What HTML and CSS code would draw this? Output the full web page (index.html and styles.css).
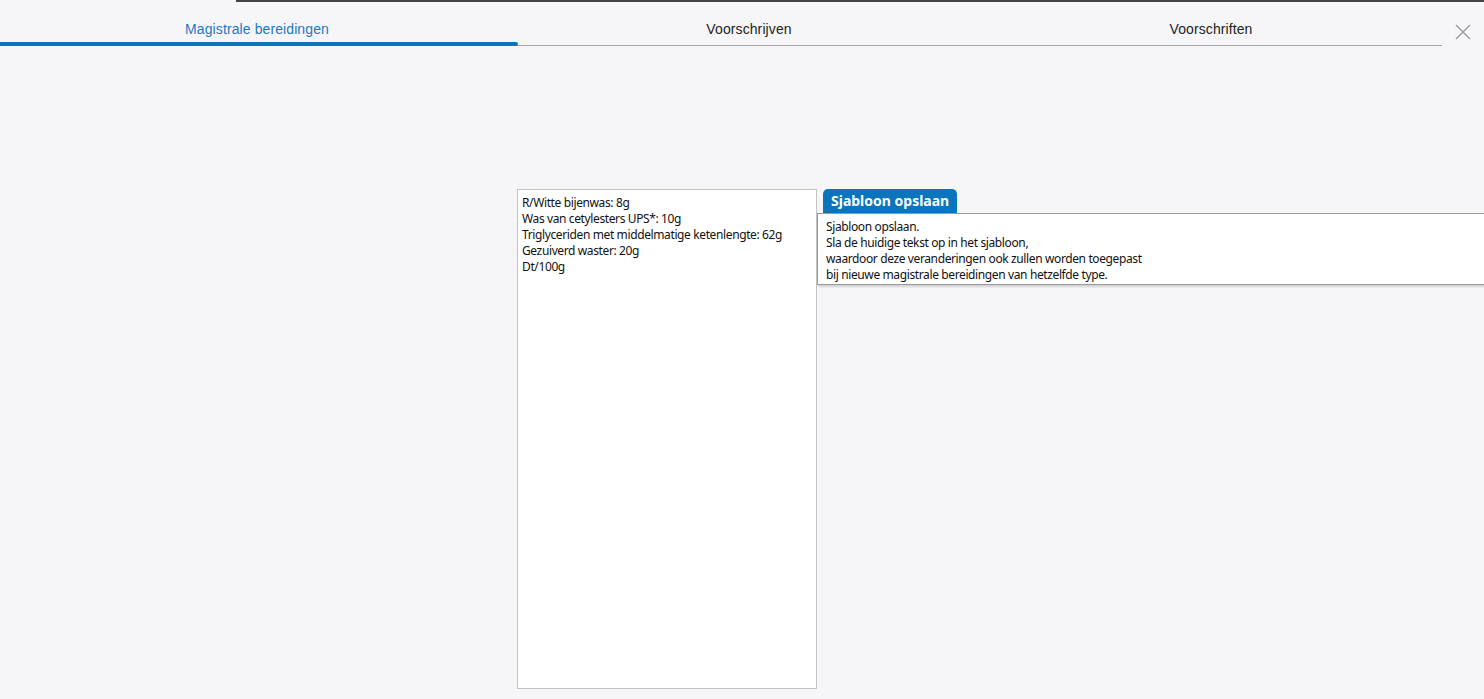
FILE: index.html
```html
<!DOCTYPE html>
<html lang="nl">
<head>
<meta charset="utf-8">
<title>Magistrale bereidingen</title>
<link rel="stylesheet" href="styles.css">
</head>
<body>
<div class="topbar"></div>
<header class="header">
  <nav class="tabs">
    <div class="tab tab-wide active">Magistrale bereidingen</div>
    <div class="tab">Voorschrijven</div>
    <div class="tab">Voorschriften</div>
  </nav>
  <div class="close">
    <svg width="16" height="16" viewBox="0 0 16 16"><path d="M1 1L15 15M15 1L1 15" stroke="#9a9a9a" stroke-width="1.4" fill="none"/></svg>
  </div>
</header>
<main class="main">
  <div class="editor">R/Witte bijenwas: 8g
Was van cetylesters UPS*: 10g
Triglyceriden met middelmatige ketenlengte: 62g
Gezuiverd waster: 20g
Dt/100g</div>
  <div class="side">
    <button class="save">Sjabloon opslaan</button>
    <div class="tooltip">Sjabloon opslaan.
Sla de huidige tekst op in het sjabloon,
waardoor deze veranderingen ook zullen worden toegepast
bij nieuwe magistrale bereidingen van hetzelfde type.</div>
  </div>
</main>
</body>
</html>
```
FILE: styles.css
```css
html, body {
  margin: 0;
  padding: 0;
  background: #f6f6f8;
  height: 100%;
  overflow: hidden;
}
.topbar {
  margin-left: 236px;
  height: 2px;
  background: #444444;
}
.header {
  display: flex;
  height: 44px;
}
.tabs {
  display: flex;
  width: 1442px;
  border-bottom: 1px solid #a5a5a5;
  height: 43px;
}
.tab {
  position: relative;
  width: 462px;
  padding-top: 19px;
  line-height: 16px;
  text-align: center;
  font-family: "Liberation Sans", Arial, sans-serif;
  font-size: 14px;
  letter-spacing: 0.1px;
  color: #222222;
}
.tab-wide {
  width: 518px;
  padding-right: 4px;
  box-sizing: border-box;
}
.tab.active {
  color: #1a78c8;
}
.tab.active::after {
  content: "";
  position: absolute;
  left: 0;
  right: 0;
  bottom: -1px;
  height: 4px;
  background: #0a74bd;
  border-radius: 0 2px 2px 0;
}
.close {
  flex: 1;
  display: flex;
  justify-content: center;
  padding-top: 22px;
}
.main {
  display: flex;
  padding-top: 143px;
  padding-left: 517px;
}
.editor {
  box-sizing: border-box;
  width: 300px;
  height: 500px;
  background: #ffffff;
  border: 1px solid #c3c3c3;
  padding: 5px 4px;
  font-family: "Noto Sans", "Open Sans", sans-serif;
  font-size: 12px;
  letter-spacing: -0.38px;
  line-height: 16px;
  color: #111111;
  white-space: pre-line;
}
.side {
  position: relative;
  padding-left: 6px;
}
.save {
  display: block;
  height: 24px;
  padding: 0 8px;
  border: none;
  border-radius: 5px 5px 0 0;
  background: #0a74bd;
  color: #ffffff;
  font-family: "Noto Sans", "Open Sans", sans-serif;
  font-weight: bold;
  font-size: 14px;
  line-height: 24px;
  margin: 0;
}
.tooltip {
  position: absolute;
  left: 0;
  top: 24px;
  width: 680px;
  box-sizing: border-box;
  height: 72px;
  background: #ffffff;
  border: 1px solid #9a9a9a;
  box-shadow: 1px 2px 2px rgba(0,0,0,0.15);
  padding: 5px 8px;
  font-family: "Noto Sans", "Open Sans", sans-serif;
  font-size: 12px;
  letter-spacing: -0.38px;
  line-height: 16px;
  color: #111111;
  white-space: pre-line;
}
```
